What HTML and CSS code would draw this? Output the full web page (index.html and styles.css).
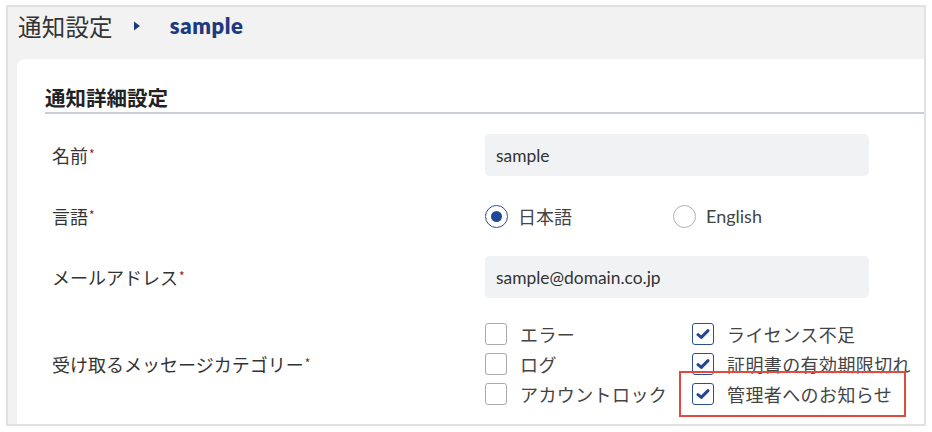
FILE: index.html
```html
<!DOCTYPE html>
<html lang="ja">
<head>
<meta charset="utf-8">
<title>通知設定</title>
<link rel="stylesheet" href="styles.css">
</head>
<body>
<div class="frame">
  <header class="crumbs">
    <span class="crumb-root">通知設定</span>
    <svg class="crumb-sep" width="8" height="10" viewBox="0 0 8 10"><path d="M1 0.5 L7 5 L1 9.5 Z" fill="#1d3a80"/></svg>
    <span class="crumb-current">sample</span>
  </header>
  <section class="card">
    <h2 class="section-title">通知詳細設定</h2>
    <div class="form">
      <div class="row">
        <div class="label">名前<span class="req">*</span></div>
        <div class="control"><div class="input">sample</div></div>
      </div>
      <div class="row">
        <div class="label">言語<span class="req">*</span></div>
        <div class="control radios">
          <label class="radio-opt"><span class="radio checked"></span><span>日本語</span></label>
          <label class="radio-opt"><span class="radio"></span><span class="latin">English</span></label>
        </div>
      </div>
      <div class="row">
        <div class="label">メールアドレス<span class="req">*</span></div>
        <div class="control"><div class="input">sample@domain.co.jp</div></div>
      </div>
      <div class="row row-cats">
        <div class="label">受け取るメッセージカテゴリー<span class="req">*</span></div>
        <div class="control checks">
          <label class="check-opt"><span class="box"></span><span>エラー</span></label>
          <label class="check-opt"><span class="box checked"><svg width="14" height="12" viewBox="0 0 14 12"><path d="M2 6.6 L5.3 9.4 L12 2.6" fill="none" stroke="#23488f" stroke-width="3" stroke-linecap="round" stroke-linejoin="round"/></svg></span><span>ライセンス不足</span></label>
          <label class="check-opt"><span class="box"></span><span>ログ</span></label>
          <label class="check-opt"><span class="box checked"><svg width="14" height="12" viewBox="0 0 14 12"><path d="M2 6.6 L5.3 9.4 L12 2.6" fill="none" stroke="#23488f" stroke-width="3" stroke-linecap="round" stroke-linejoin="round"/></svg></span><span>証明書の有効期限切れ</span></label>
          <label class="check-opt"><span class="box"></span><span>アカウントロック</span></label>
          <label class="check-opt highlight"><span class="box checked"><svg width="14" height="12" viewBox="0 0 14 12"><path d="M2 6.6 L5.3 9.4 L12 2.6" fill="none" stroke="#23488f" stroke-width="3" stroke-linecap="round" stroke-linejoin="round"/></svg></span><span>管理者へのお知らせ</span></label>
        </div>
      </div>
    </div>
  </section>
</div>
</body>
</html>
```
FILE: styles.css
```css
* { box-sizing: border-box; }
html, body { margin: 0; padding: 0; background: #fff; }
body {
  font-family: "Noto Sans CJK JP", "Noto Sans", sans-serif;
  color: #333;
  width: 932px;
  height: 432px;
  overflow: hidden;
}
.frame {
  margin: 5px 0 0 6px;
  width: 920px;
  height: 421px;
  border: 2px solid #e1e1e1;
  background: #f2f2f2;
  display: flex;
  flex-direction: column;
  padding-left: 9px;
  overflow: hidden;
}
.crumbs {
  height: 52px;
  flex: none;
  display: flex;
  align-items: center;
  padding: 0 0 14px 1px;
}
.crumb-root {
  font-size: 23.5px;
  line-height: 32px;
  color: #333;
  letter-spacing: 0.2px;
}
.crumb-sep { margin: 0 0 0 20px; }
.crumb-current {
  margin-left: 29px;
  font-family: "Lato", "Noto Sans", sans-serif;
  font-weight: 800;
  font-size: 22px;
  letter-spacing: 0.6px;
  color: #1d3a80;
  line-height: 32px;
}
.card {
  flex: 1;
  background: #fff;
  border-top-left-radius: 8px;
  padding: 24px 0 0 28px;
}
.section-title {
  margin: 0;
  font-size: 20.5px;
  line-height: 28px;
  font-weight: 700;
  color: #222;
  padding-bottom: 1px;
  border-bottom: 2px solid #c9ccd9;
}
.form {
  display: flex;
  flex-direction: column;
  gap: 19px;
  margin-top: 20px;
  padding-left: 7px;
}
.row {
  display: flex;
  align-items: center;
  min-height: 42px;
}
.row-cats { margin-top: 6px; }
.label {
  width: 433px;
  flex: none;
  font-size: 18px;
  color: #333;
}
.req { color: #8e1c1c; font-size: 12px; vertical-align: 4px; margin-left: 1px; }
.control { width: 384px; flex: none; }
.input {
  height: 42px;
  background: #f1f2f4;
  border-radius: 5px;
  padding-left: 11px;
  display: flex;
  align-items: center;
  font-family: "Lato", "Noto Sans", sans-serif;
  font-size: 17.4px;
  color: #333;
}
.radios { display: flex; align-items: center; }
.radio-opt {
  width: 188px;
  display: flex;
  align-items: center;
  gap: 10px;
  font-size: 18px;
  color: #444;
}
.latin { font-family: "Lato", "Noto Sans", sans-serif; font-size: 18px; }
.radio {
  width: 23px;
  height: 23px;
  border-radius: 50%;
  border: 1.5px solid #b0b0b0;
  display: flex;
  align-items: center;
  justify-content: center;
}
.radio.checked { border-color: #2b4f96; }
.radio.checked::after {
  content: "";
  width: 11px;
  height: 11px;
  border-radius: 50%;
  background: #1f4898;
}
.checks {
  display: grid;
  grid-template-columns: 207px 220px;
  row-gap: 8px;
}
.check-opt {
  display: flex;
  align-items: center;
  gap: 13px;
  height: 22px;
  font-size: 18px;
  color: #444;
  white-space: nowrap;
  position: relative;
  letter-spacing: 0.4px;
}
.box {
  width: 22px;
  height: 22px;
  flex: none;
  border: 1.5px solid #aaa;
  border-radius: 3px;
  display: flex;
  align-items: center;
  justify-content: center;
  background: #fff;
}
.box.checked { border-color: #2c4f94; }
.highlight::before {
  content: "";
  position: absolute;
  left: -13px;
  top: -12px;
  width: 223px;
  height: 42px;
  border: 2px solid #e4493f;
  pointer-events: none;
}
```
